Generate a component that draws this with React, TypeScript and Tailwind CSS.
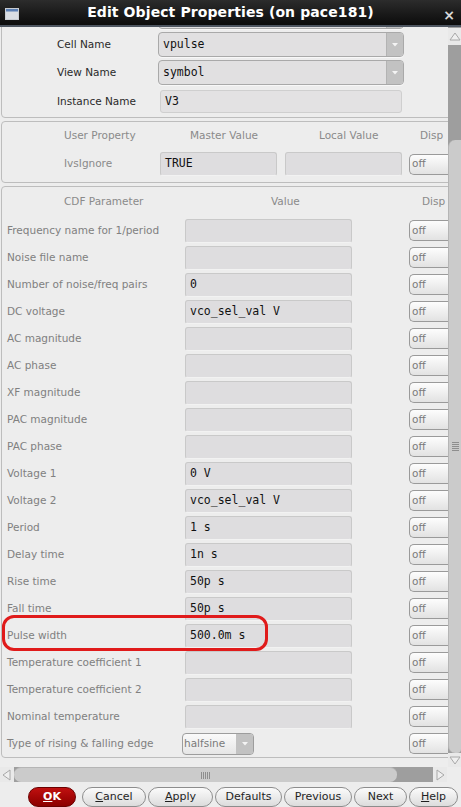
import React from 'react';

const sans = { fontFamily: '"DejaVu Sans", "Noto Sans", sans-serif' };
const mono = { fontFamily: '"DejaVu Sans Mono", "Liberation Mono", monospace' };

const cdfRows: { label: string; value?: string; combo?: boolean }[] = [
  { label: 'Frequency name for 1/period' },
  { label: 'Noise file name' },
  { label: 'Number of noise/freq pairs', value: '0' },
  { label: 'DC voltage', value: 'vco_sel_val V' },
  { label: 'AC magnitude' },
  { label: 'AC phase' },
  { label: 'XF magnitude' },
  { label: 'PAC magnitude' },
  { label: 'PAC phase' },
  { label: 'Voltage 1', value: '0 V' },
  { label: 'Voltage 2', value: 'vco_sel_val V' },
  { label: 'Period', value: '1 s' },
  { label: 'Delay time', value: '1n s' },
  { label: 'Rise time', value: '50p s' },
  { label: 'Fall time', value: '50p s' },
  { label: 'Pulse width', value: '500.0m s' },
  { label: 'Temperature coefficient 1' },
  { label: 'Temperature coefficient 2' },
  { label: 'Nominal temperature' },
  { label: 'Type of rising & falling edge', combo: true },
];

function Field({ value, w }: { value?: string; w: string }) {
  return (
    <div
      className={`${w} h-[24px] shrink-0 rounded-[3px] border border-[#c9c9c9] border-b-[#f2f2f2] bg-[#dedddf] pl-[4px] flex items-center text-[11.5px] text-[#111]`}
      style={mono}
    >
      {value}
    </div>
  );
}

function Combo({ value }: { value?: string }) {
  return (
    <div className="w-[246px] h-[25px] shrink-0 flex rounded-[4px] border border-[#a9a9a9] bg-[#e1e0e1] overflow-hidden shadow-[0_1px_0_#f8f8f8]">
      <div className="flex-1 flex items-center pl-[4px] text-[11.5px] text-[#111]" style={mono}>{value}</div>
      <div className="w-[17px] bg-[#c2c2c2] border-l border-[#b3b3b3] flex items-center justify-center">
        <svg width="6" height="4" viewBox="0 0 6 4"><path d="M0 0 L6 0 L3 3.5 Z" fill="#f4f4f4" /></svg>
      </div>
    </div>
  );
}

function OffButton() {
  return (
    <div
      className="w-[52px] h-[21px] shrink-0 rounded-l-[5px] border border-[#9a9a9a] border-r-0 bg-gradient-to-b from-[#fdfdfd] to-[#e2e2e2] flex items-center pl-[2px] text-[10.5px] text-[#7a7a7a]"
      style={sans}
    >
      off
    </div>
  );
}

function Tri({ dir }: { dir: 'up' | 'down' | 'left' | 'right' }) {
  const d = {
    up: 'M1 9 L6 2 L11 9 Z',
    down: 'M1 3 L6 10 L11 3 Z',
    left: 'M9 1 L2 6 L9 11 Z',
    right: 'M3 1 L10 6 L3 11 Z',
  }[dir];
  return (
    <svg width="12" height="12" viewBox="0 0 12 12">
      <path d={d} fill="#efefef" stroke="#a8a8a8" strokeWidth="1" />
    </svg>
  );
}

function Btn({ children, w, primary }: { children: React.ReactNode; w: string; primary?: boolean }) {
  return (
    <div
      className={`${w} h-[20px] shrink-0 rounded-full flex items-center justify-center text-[11px] ${
        primary
          ? 'bg-gradient-to-b from-[#c01010] to-[#8c0000] border border-[#6a0000] text-white font-bold'
          : 'bg-gradient-to-b from-[#fbfbfb] to-[#dcdcdc] border border-[#8d8d8d] text-[#1f1f1f]'
      }`}
      style={sans}
    >
      {children}
    </div>
  );
}

export default function App() {
  return (
    <div className="w-[461px] h-[807px] overflow-hidden relative bg-[#ededed] flex flex-col" style={sans}>
      {/* title bar */}
      <div className="h-[27px] shrink-0 relative z-10 flex items-center justify-center bg-gradient-to-b from-[#2c2c2c] to-[#0c0c0c] border-b-2 border-[#4d5560]">
        <svg className="absolute left-[5px] top-[8px]" width="14" height="12" viewBox="0 0 14 12">
          <rect x="0.5" y="0.5" width="13" height="11" fill="#d9dde3" stroke="#c8ccd2" />
          <rect x="1" y="1" width="12" height="2.5" fill="#5b7fb4" />
        </svg>
        <span className="text-white font-bold text-[14px] tracking-[0.1px]">Edit Object Properties (on pace181)</span>
        <span className="absolute right-[6px] top-[5px] text-[#d8d8d8] text-[14px] font-bold">×</span>
      </div>

      {/* scroll view */}
      <div className="flex h-[740px] shrink-0">
        <div className="flex-1 overflow-hidden">
          <div className="w-[470px] -mt-[30px] ml-[1px] flex flex-col gap-[3px]">
            {/* group 1 (scrolled, library row mostly hidden) */}
            <div className="border border-[#bdbdbd] rounded-[4px] pt-[6px] pb-[4px] flex flex-col">
              <div className="flex items-center h-[25px]">
                <div className="w-[156px]" />
                <Combo />
              </div>
              <div className="flex items-center h-[25px] mt-[3px]">
                <div className="w-[156px] pl-[55px] text-[10.5px] text-[#2a2a2a]">Cell Name</div>
                <Combo value="vpulse" />
              </div>
              <div className="flex items-center h-[25px] mt-[3px]">
                <div className="w-[156px] pl-[55px] text-[10.5px] text-[#2a2a2a]">View Name</div>
                <Combo value="symbol" />
              </div>
              <div className="flex items-center h-[23px] mt-[5px]">
                <div className="w-[158px] pl-[55px] text-[10.5px] text-[#2a2a2a]">Instance Name</div>
                <div className="w-[242px] h-[23px] rounded-[3px] border border-[#cfcfcf] bg-[#e3e2e3] pl-[4px] flex items-center text-[11.5px] text-[#111]" style={mono}>V3</div>
              </div>
            </div>

            {/* group 2 */}
            <div className="border border-[#bdbdbd] rounded-[4px] pb-[6px]">
              <div className="flex items-center h-[27px] text-[10.5px] text-[#8a8a8a]">
                <div className="w-[157px] pl-[62px]">User Property</div>
                <div className="w-[126px] pl-[31px]">Master Value</div>
                <div className="w-[118px] pl-[34px]">Local Value</div>
                <div className="pl-[17px]">Disp</div>
              </div>
              <div className="flex items-center h-[24px] mt-[3px]">
                <div className="w-[158px] pl-[62px] text-[10.5px] text-[#8a8a8a]">IvsIgnore</div>
                <Field w="w-[117px]" value="TRUE" />
                <div className="w-[8px]" />
                <Field w="w-[117px]" />
                <div className="w-[7px]" />
                <OffButton />
              </div>
            </div>

            {/* group 3 */}
            <div className="border border-[#bdbdbd] rounded-[4px]">
              <div className="flex items-center h-[30px] text-[10.5px] text-[#8a8a8a]">
                <div className="w-[269px] pl-[62px]">CDF Parameter</div>
                <div className="w-[150px]">Value</div>
                <div className="pl-[1px]">Disp</div>
              </div>
              {cdfRows.map((r) => (
                <div key={r.label} className="flex items-center h-[27px]">
                  <div className="w-[183px] pl-[5px] text-[10.5px] text-[#808080] whitespace-nowrap">{r.label}</div>
                  {r.combo ? (
                    <div className="w-[167px] shrink-0 -ml-[3px] mr-[3px]">
                      <div className="w-[72px] h-[22px] flex rounded-[4px] border border-[#9d9d9d] bg-gradient-to-b from-[#fafafa] to-[#e6e6e6] overflow-hidden">
                        <div className="flex-1 flex items-center pl-[1px] text-[10.5px] text-[#7a7a7a]">halfsine</div>
                        <div className="w-[17px] bg-[#c2c2c2] flex items-center justify-center">
                          <svg width="6" height="4" viewBox="0 0 6 4"><path d="M0 0 L6 0 L3 3.5 Z" fill="#f4f4f4" /></svg>
                        </div>
                      </div>
                    </div>
                  ) : (
                    <Field w="w-[167px]" value={r.value} />
                  )}
                  <div className="w-[57px] shrink-0" />
                  <OffButton />
                </div>
              ))}
            </div>
          </div>
        </div>

        {/* vertical scrollbar */}
        <div className="w-[13px] shrink-0 flex flex-col bg-[#9e9e9e]">
          <div className="h-[17px] mt-[1px] bg-[#e9e9e9] flex items-center justify-center">
            <Tri dir="up" />
          </div>
          <div className="flex-1 flex flex-col pt-[95px]">
            <div className="flex-1 bg-[#cbcbcb] rounded-l-[7px] rounded-br-[4px] border-l border-[#b5b5b5] flex items-center justify-center">
              <div className="flex flex-col gap-[1px] w-[7px]">
                {[0, 1, 2, 3, 4].map((i) => (
                  <div key={i} className="h-[1px] bg-[#8e8e8e]" />
                ))}
              </div>
            </div>
          </div>
          <div className="h-[14px] bg-[#e9e9e9] flex items-center justify-center">
            <Tri dir="down" />
          </div>
        </div>
      </div>

      {/* horizontal scrollbar */}
      <div className="h-[15px] shrink-0 flex">
        <div className="w-[14px] bg-[#e9e9e9] flex items-center justify-center">
          <Tri dir="left" />
        </div>
        <div className="w-[419px] bg-[#9e9e9e] flex pr-[36px]">
          <div className="flex-1 bg-[#cbcbcb] rounded-r-[7px] rounded-l-[7px] border-t border-[#b5b5b5] flex items-center justify-center">
            <div className="flex gap-[1px] h-[7px]">
              {[0, 1, 2, 3, 4].map((i) => (
                <div key={i} className="w-[1px] bg-[#8e8e8e]" />
              ))}
            </div>
          </div>
        </div>
        <div className="w-[14px] bg-[#e9e9e9] flex items-center justify-center">
          <Tri dir="right" />
        </div>
      </div>

      {/* buttons */}
      <div className="flex-1 flex items-start pt-[5px] pl-[28px] gap-[2px]">
        <Btn w="w-[48px]" primary>
          <span><u>O</u>K</span>
        </Btn>
        <div className="w-[2px]" />
        <Btn w="w-[64px]"><span><u>C</u>ancel</span></Btn>
        <Btn w="w-[65px]"><span><u>A</u>pply</span></Btn>
        <Btn w="w-[67px]">Defaults</Btn>
        <Btn w="w-[68px]">Previous</Btn>
        <Btn w="w-[53px]">Next</Btn>
        <Btn w="w-[49px]"><span><u>H</u>elp</span></Btn>
      </div>

      {/* red annotation */}
      <div className="absolute left-[2px] top-[615px] w-[266px] h-[36px] rounded-[12px] border-[3px] border-[#e01b1b] pointer-events-none" />
    </div>
  );
}
